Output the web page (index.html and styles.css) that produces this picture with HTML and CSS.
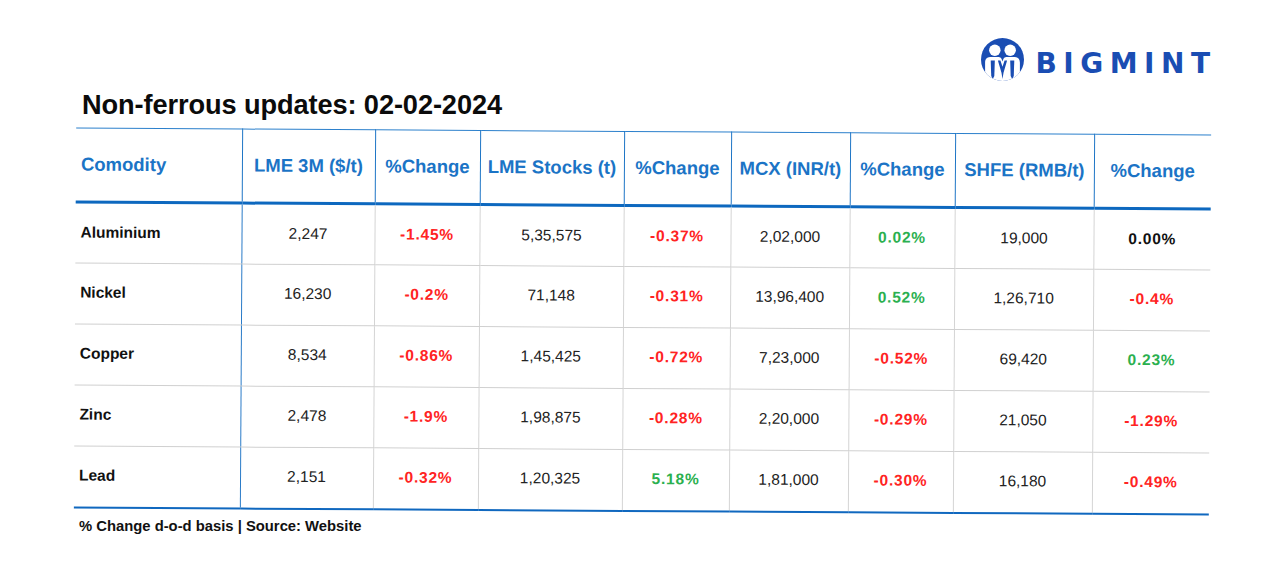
FILE: index.html
```html
<!DOCTYPE html>
<html lang="en">
<head>
<meta charset="utf-8">
<title>Non-ferrous updates</title>
<link rel="stylesheet" href="styles.css">
</head>
<body>
<div class="page">
  <div class="brand">
    <svg class="brand-icon" viewBox="0 0 42 42" width="43" height="43" aria-hidden="true">
      <defs>
        <clipPath id="circ"><circle cx="21" cy="21" r="21"/></clipPath>
      </defs>
      <g clip-path="url(#circ)">
        <rect x="0" y="0" width="42" height="42" fill="#1a4db3"/>
        <path d="M4 24 C4 19.5 7 18.5 10 18.5 L17 18.5 C19 18.5 20 19.5 20.5 21.5 L21 23 L21.5 21.5 C22 19.5 23 18.5 25 18.5 L32 18.5 C35 18.5 38 19.5 38 24 L38 42 L4 42 Z" fill="#fff"/>
        <path d="M9.5 22 L13.5 22 L13 37 L11.5 40 L10 37 Z" fill="#1a4db3"/>
        <path d="M28.5 22 L32.5 22 L32 37 L30.5 40 L29 37 Z" fill="#1a4db3"/>
        <path d="M16.5 22 L19 22 L21 28 L23 22 L25.5 22 L22 34 L21 40 L20 34 Z" fill="#1a4db3"/>
      </g>
      <circle cx="13.5" cy="12" r="5.6" fill="#fff"/>
      <circle cx="28.5" cy="12" r="5.6" fill="#fff"/>
    </svg>
    <span class="brand-name">BIGMINT</span>
  </div>

  <h1 class="title">Non-ferrous updates: 02-02-2024</h1>

  <table class="grid">
    <colgroup>
      <col class="c-name"><col class="c1"><col class="c2"><col class="c3"><col class="c4"><col class="c5"><col class="c6"><col class="c7"><col class="c8">
    </colgroup>
    <thead>
      <tr>
        <th class="left">Comodity</th>
        <th>LME 3M ($/t)</th>
        <th>%Change</th>
        <th>LME Stocks (t)</th>
        <th>%Change</th>
        <th>MCX (INR/t)</th>
        <th>%Change</th>
        <th>SHFE (RMB/t)</th>
        <th>%Change</th>
      </tr>
    </thead>
    <tbody>
      <tr>
        <td class="name">Aluminium</td>
        <td class="num">2,247</td><td class="pct neg">-1.45%</td>
        <td class="num">5,35,575</td><td class="pct neg">-0.37%</td>
        <td class="num">2,02,000</td><td class="pct pos">0.02%</td>
        <td class="num">19,000</td><td class="pct flat">0.00%</td>
      </tr>
      <tr>
        <td class="name">Nickel</td>
        <td class="num">16,230</td><td class="pct neg">-0.2%</td>
        <td class="num">71,148</td><td class="pct neg">-0.31%</td>
        <td class="num">13,96,400</td><td class="pct pos">0.52%</td>
        <td class="num">1,26,710</td><td class="pct neg">-0.4%</td>
      </tr>
      <tr>
        <td class="name">Copper</td>
        <td class="num">8,534</td><td class="pct neg">-0.86%</td>
        <td class="num">1,45,425</td><td class="pct neg">-0.72%</td>
        <td class="num">7,23,000</td><td class="pct neg">-0.52%</td>
        <td class="num">69,420</td><td class="pct pos">0.23%</td>
      </tr>
      <tr>
        <td class="name">Zinc</td>
        <td class="num">2,478</td><td class="pct neg">-1.9%</td>
        <td class="num">1,98,875</td><td class="pct neg">-0.28%</td>
        <td class="num">2,20,000</td><td class="pct neg">-0.29%</td>
        <td class="num">21,050</td><td class="pct neg">-1.29%</td>
      </tr>
      <tr>
        <td class="name">Lead</td>
        <td class="num">2,151</td><td class="pct neg">-0.32%</td>
        <td class="num">1,20,325</td><td class="pct pos">5.18%</td>
        <td class="num">1,81,000</td><td class="pct neg">-0.30%</td>
        <td class="num">16,180</td><td class="pct neg">-0.49%</td>
      </tr>
    </tbody>
  </table>

  <p class="note">% Change d-o-d basis | Source: Website</p>
</div>
</body>
</html>
```

FILE: styles.css
```css
* { box-sizing: border-box; }

html, body {
  margin: 0;
  padding: 0;
  background: #fff;
}

body {
  font-family: "Liberation Sans", Arial, sans-serif;
  color: #111;
}

.page {
  width: 1280px;
  padding: 38px 0 0 75px;
}

.brand {
  width: 1135px;
  height: 43px;
  display: flex;
  justify-content: flex-end;
  align-items: center;
  gap: 11px;
}

.brand-icon {
  display: block;
  flex: none;
}

.brand-name {
  font-family: "DejaVu Sans", "Liberation Sans", sans-serif;
  font-weight: 700;
  font-size: 28px;
  letter-spacing: 6.5px;
  color: #1a4db3;
  line-height: 1;
  margin-right: -6.5px;
  padding-top: 9px;
}

.title {
  margin: 8px 0 0 7px;
  font-size: 27.2px;
  line-height: 32px;
  font-weight: 700;
  color: #0b0b0b;
  letter-spacing: -0.1px;
}

.grid {
  margin-top: 10px;
  width: 1135px;
  table-layout: fixed;
  border-collapse: collapse;
  transform: rotate(0.35deg);
  transform-origin: 50% 50%;
}

.c-name { width: 166px; }
.c1 { width: 133px; }
.c2 { width: 105px; }
.c3 { width: 144px; }
.c4 { width: 107px; }
.c5 { width: 119px; }
.c6 { width: 105px; }
.c7 { width: 139px; }
.c8 { width: 117px; }

.grid th {
  height: 74px;
  padding: 0 2px;
  font-size: 18.5px;
  font-weight: 700;
  color: #1b74c6;
  text-align: center;
  vertical-align: middle;
  border-top: 1.5px solid #2c80cc;
  border-bottom: 3px solid #0d68bf;
  border-left: 1px solid #1f76c6;
  border-right: 1px solid #1f76c6;
  white-space: nowrap;
}

.grid th.left {
  text-align: left;
  padding-left: 5px;
  border-left: none;
}

.grid th:last-child { border-right: none; }

.grid td {
  height: 61px;
  padding: 0 2px 2px;
  text-align: center;
  vertical-align: middle;
  font-size: 15.5px;
  border-bottom: 1.5px solid #d0d0d0;
  border-left: 1.5px solid #d4d4d4;
  border-right: 1.5px solid #d4d4d4;
}

.grid td:first-child { border-left: none; }
.grid td:last-child { border-right: none; }

.grid td.name {
  text-align: left;
  padding-left: 5px;
  font-weight: 700;
  color: #111;
  border-right: 1.5px solid #2a7bc8;
}

.grid td.num {
  color: #222;
  border-left: 1.5px solid #2a7bc8;
}

.grid td:nth-child(n+3).num { border-left: 1.5px solid #d4d4d4; }

.grid tbody tr:last-child td {
  border-bottom: 2px solid #1068bf;
}

.pct {
  font-weight: 700;
  letter-spacing: 0.8px;
}

.neg { color: #ff2323; }
.pos { color: #2bb04f; }
.flat { color: #111; }

.note {
  margin: 5px 0 0 4px;
  font-size: 14.8px;
  line-height: 18px;
  font-weight: 700;
  color: #111;
}
```
